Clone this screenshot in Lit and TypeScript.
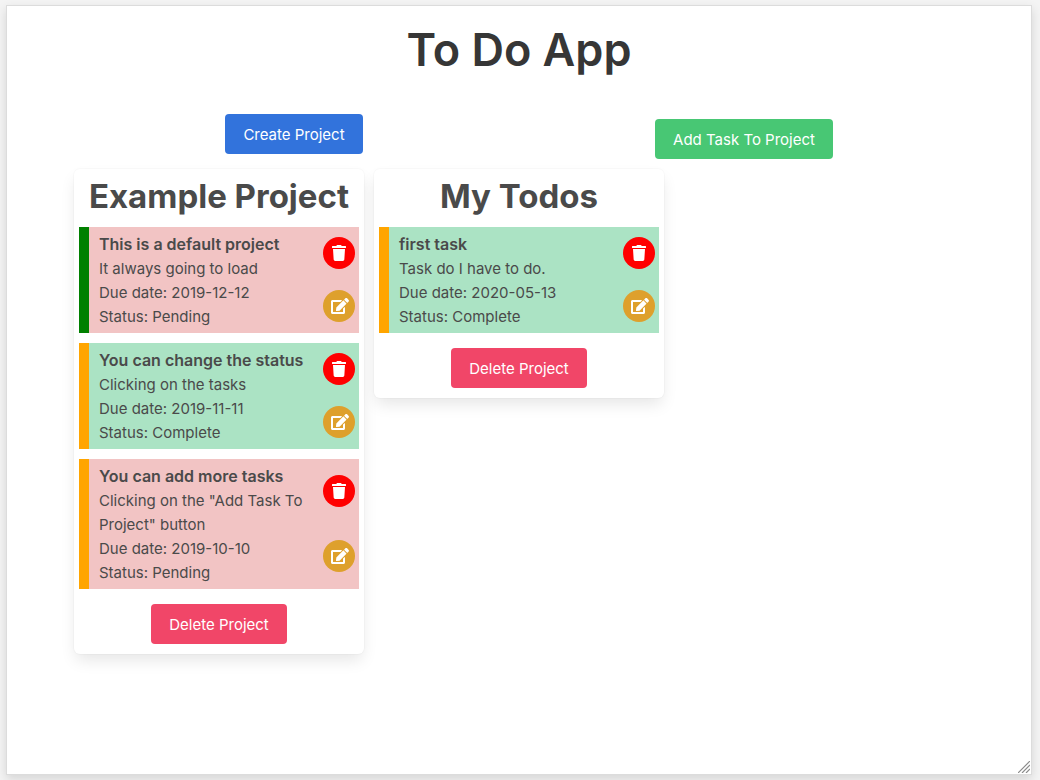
import { LitElement, html, css, svg } from "lit";
import { customElement, property } from "lit/decorators.js";
import { classMap } from "lit/directives/class-map.js";

interface Task {
  title: string;
  description: string;
  due: string;
  complete: boolean;
  priority: "low" | "medium";
}

interface Project {
  name: string;
  tasks: Task[];
}

const PROJECTS: Project[] = [
  {
    name: "Example Project",
    tasks: [
      { title: "This is a default project", description: "It always going to load", due: "2019-12-12", complete: false, priority: "low" },
      { title: "You can change the status", description: "Clicking on the tasks", due: "2019-11-11", complete: true, priority: "medium" },
      { title: "You can add more tasks", description: 'Clicking on the "Add Task To Project" button', due: "2019-10-10", complete: false, priority: "medium" },
    ],
  },
  {
    name: "My Todos",
    tasks: [
      { title: "first task", description: "Task do I have to do.", due: "2020-05-13", complete: true, priority: "medium" },
    ],
  },
];

const trashIcon = html`<svg class="trash" viewBox="0 0 448 512" aria-hidden="true">
  ${svg`<path fill="currentColor" d="M432 32H312l-9.4-18.7A24 24 0 0 0 281.1 0H166.8a23.72 23.72 0 0 0-21.4 13.3L136 32H16A16 16 0 0 0 0 48v32a16 16 0 0 0 16 16h416a16 16 0 0 0 16-16V48a16 16 0 0 0-16-16zM53.2 467a48 48 0 0 0 47.9 45h245.8a48 48 0 0 0 47.9-45L416 128H32z"/>`}
</svg>`;

const editIcon = html`<svg class="edit" viewBox="0 0 576 512" aria-hidden="true">
  ${svg`<path fill="currentColor" d="M402.6 83.2l90.2 90.2c3.8 3.8 3.8 10 0 13.8L274.4 405.6l-92.8 10.3c-12.4 1.4-22.9-9.1-21.5-21.5l10.3-92.8L388.8 83.2c3.8-3.8 10-3.8 13.8 0zm162-22.9l-48.8-48.8c-15.2-15.2-39.9-15.2-55.2 0l-35.4 35.4c-3.8 3.8-3.8 10 0 13.8l90.2 90.2c3.8 3.8 10 3.8 13.8 0l35.4-35.4c15.2-15.3 15.2-40 0-55.2zM384 346.2V448H64V128h229.8c3.2 0 6.2-1.3 8.5-3.5l40-40c7.6-7.6 2.2-20.5-8.5-20.5H48C21.5 64 0 85.5 0 112v352c0 26.5 21.5 48 48 48h352c26.5 0 48-21.5 48-48V306.2c0-10.7-12.9-16-20.5-8.5l-40 40c-2.2 2.3-3.5 5.3-3.5 8.5z"/>`}
</svg>`;

const buttonStyles = css`
  .button {
    height: 40px;
    padding: 2px 17px 0;
    border: 1px solid transparent;
    border-radius: 4px;
    color: #fff;
    font: inherit;
    line-height: 24px;
    white-space: nowrap;
    cursor: pointer;
  }
`;

@customElement("task-item")
export class TaskItem extends LitElement {
  @property({ attribute: false }) task!: Task;

  static styles = css`
    :host {
      display: block;
    }
    .task {
      display: flex;
      padding-right: 4px;
      border-left: 10px solid orange;
      background: #f2c4c4;
      cursor: pointer;
    }
    .low {
      border-left-color: green;
    }
    .complete {
      background: #abe3c4;
    }
    .details {
      flex: 1;
      min-width: 0;
      padding: 5px 10px 4px;
    }
    .line {
      margin: 0;
    }
    .heading {
      margin: 0 0 1px;
      font-size: 16px;
      font-weight: 600;
    }
    .actions {
      display: flex;
      flex-direction: column;
      justify-content: space-around;
      padding-bottom: 1px;
    }
    .action {
      display: flex;
      align-items: center;
      justify-content: center;
      width: 32px;
      height: 32px;
      padding: 0;
      border: 0;
      border-radius: 50%;
      color: #fff;
      cursor: pointer;
    }
    .remove {
      background: red;
    }
    .modify {
      padding-left: 2px;
      background: #dea02c;
    }
    .trash {
      width: 14px;
      height: 16px;
    }
    .edit {
      width: 18px;
      height: 16px;
    }
  `;

  render() {
    const t = this.task;
    return html`
      <article class=${classMap({ task: true, low: t.priority === "low", complete: t.complete })}>
        <div class="details">
          <h3 class="heading">${t.title}</h3>
          <p class="line">${t.description}</p>
          <p class="line">Due date: ${t.due}</p>
          <p class="line">Status: ${t.complete ? "Complete" : "Pending"}</p>
        </div>
        <div class="actions">
          <button class="action remove" type="button" aria-label="Delete task">${trashIcon}</button>
          <button class="action modify" type="button" aria-label="Edit task">${editIcon}</button>
        </div>
      </article>
    `;
  }
}

@customElement("project-card")
export class ProjectCard extends LitElement {
  @property({ attribute: false }) project!: Project;

  static styles = [
    buttonStyles,
    css`
      :host {
        display: block;
      }
      .card {
        display: flex;
        flex-direction: column;
        gap: 10px;
        padding: 0 5px 10px;
        border-radius: 6px;
        background: #fff;
        box-shadow: 0 8px 16px -2px rgba(10, 10, 10, 0.1), 0 0 0 1px rgba(10, 10, 10, 0.02);
      }
      .name {
        margin: 0;
        padding-top: 6px;
        font-size: 33px;
        font-weight: 700;
        line-height: 42px;
        text-align: center;
      }
      .footer {
        display: flex;
        justify-content: center;
        padding-top: 5px;
      }
      .danger {
        background: #f14668;
      }
    `,
  ];

  render() {
    return html`
      <section class="card">
        <h2 class="name">${this.project.name}</h2>
        ${this.project.tasks.map((task) => html`<task-item .task=${task}></task-item>`)}
        <div class="footer">
          <button class="button danger" type="button">Delete Project</button>
        </div>
      </section>
    `;
  }
}

@customElement("app-root")
export class AppRoot extends LitElement {
  static styles = [
    buttonStyles,
    css`
      :host {
        display: flex;
        box-sizing: border-box;
        min-height: 100vh;
        padding: 5px 8px 5px 6px;
        background: #f4f4f4;
        color: #4a4a4a;
        font-family: Inter, "Liberation Sans", sans-serif;
        font-size: 15px;
        line-height: 24px;
      }
      .window {
        position: relative;
        flex: 1;
        min-width: 0;
        border: 1px solid #dcdcdc;
        background: #fff;
        box-shadow: 0 4px 10px rgba(0, 0, 0, 0.13);
      }
      .title {
        margin: 0;
        padding: 17px 0 34px;
        color: #363636;
        font-size: 45px;
        font-weight: 600;
        line-height: 54px;
        text-align: center;
      }
      .container {
        max-width: 900px;
        margin: 0 auto;
      }
      .toolbar {
        display: grid;
        grid-template-columns: 1fr 1fr;
        align-items: end;
        justify-items: center;
        padding-top: 3px;
      }
      .create {
        margin-bottom: 5px;
        background: #3273dc;
      }
      .add {
        background: #48c774;
      }
      .projects {
        display: grid;
        grid-template-columns: repeat(auto-fill, minmax(280px, 1fr));
        align-items: start;
        gap: 10px;
        padding: 10px 5px;
      }
      .grip {
        position: absolute;
        right: 1px;
        bottom: 1px;
        width: 12px;
        height: 12px;
      }
    `,
  ];

  render() {
    return html`
      <main class="window">
        <h1 class="title">To Do App</h1>
        <div class="container">
          <div class="toolbar">
            <button class="button create" type="button">Create Project</button>
            <button class="button add" type="button">Add Task To Project</button>
          </div>
          <div class="projects">
            ${PROJECTS.map((project) => html`<project-card .project=${project}></project-card>`)}
          </div>
        </div>
        <svg class="grip" viewBox="0 0 12 12" aria-hidden="true">
          <path d="M0 12L12 0M4 12L12 4M8 12L12 8" stroke="#8c8c8c" stroke-width="1.2" fill="none" />
        </svg>
      </main>
    `;
  }
}
